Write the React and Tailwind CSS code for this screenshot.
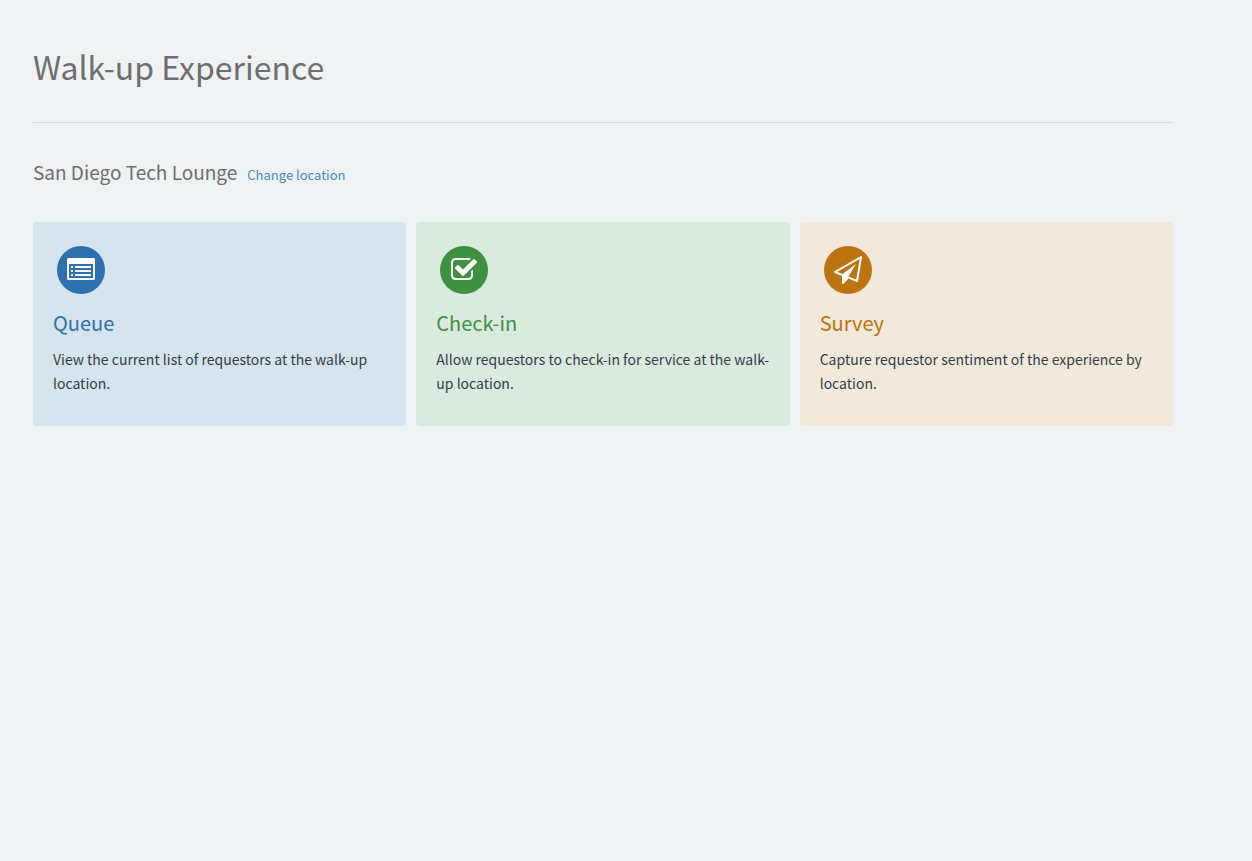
import React from "react";

function QueueIcon() {
  return (
    <svg viewBox="0 0 28 28" className="size-7" fill="none" aria-hidden="true">
      <path
        fill="currentColor"
        fillRule="evenodd"
        d="M1.500 2h25A1.500 1.500 0 0 1 28 3.500v19a1.500 1.500 0 0 1-1.500 1.500h-25A1.500 1.500 0 0 1 0 22.500v-19A1.500 1.500 0 0 1 1.500 2zM2.500 8a.5.5 0 0 0-.5.500v13a.5.5 0 0 0 .5.500h23a.5.5 0 0 0 .5-.5v-13a.5.5 0 0 0-.5-.5z"
      />
      <g fill="currentColor">
        <rect x="4" y="10" width="2" height="2" rx="0.500" />
        <rect x="4" y="14" width="2" height="2" rx="0.500" />
        <rect x="4" y="18" width="2" height="2" rx="0.500" />
        <rect x="8" y="10" width="16" height="2" rx="0.500" />
        <rect x="8" y="14" width="16" height="2" rx="0.500" />
        <rect x="8" y="18" width="16" height="2" rx="0.500" />
      </g>
    </svg>
  );
}

function CheckInIcon() {
  return (
    <svg viewBox="0 0 1792 1792" className="size-7" fill="currentColor" aria-hidden="true">
      <path d="M1472 930v318q0 119-84.500 203.500t-203.500 84.500h-832q-119 0-203.500-84.500t-84.500-203.500v-832q0-119 84.500-203.500t203.500-84.500h832q63 0 117 25 15 7 18 23 3 17-9 29l-49 49q-10 10-23 10-3 0-9-2-23-6-45-6h-832q-66 0-113 47t-47 113v832q0 66 47 113t113 47h832q66 0 113-47t47-113v-254q0-13 9-22l64-64q10-10 23-10 6 0 12 3 20 8 20 29zm231-489l-814 814q-24 24-57 24t-57-24l-430-430q-24-24-24-57t24-57l110-110q24-24 57-24t57 24l263 263 647-647q24-24 57-24t57 24l110 110q24 24 24 57t-24 57z" />
    </svg>
  );
}

function SurveyIcon() {
  return (
    <svg viewBox="0 0 1792 1792" className="size-7" fill="currentColor" aria-hidden="true">
      <path d="M1764 11q33 24 27 64l-256 1536q-5 29-32 45-14 8-31 8-11 0-24-5l-527-215-298 327q-18 21-47 21-14 0-23-4-19-7-30-23.500t-11-36.500v-452l-472-193q-37-14-40-55-3-39 32-59l1664-960q35-21 68 2zm-342 1499l221-1323-1434 827 336 137 863-639-478 797z" />
    </svg>
  );
}

const cards = [
  {
    title: "Queue",
    text: "View the current list of requestors at the walk-up location.",
    Icon: QueueIcon,
    panel: "bg-[#d6e4ed]",
    badge: "bg-[#2e71ae]",
    heading: "text-[#2e71ae]",
  },
  {
    title: "Check-in",
    text: "Allow requestors to check-in for service at the walk-up location.",
    Icon: CheckInIcon,
    panel: "bg-[#daeadf]",
    badge: "bg-[#3d9140]",
    heading: "text-[#3d9140]",
  },
  {
    title: "Survey",
    text: "Capture requestor sentiment of the experience by location.",
    Icon: SurveyIcon,
    panel: "bg-[#f1e9dc]",
    badge: "bg-[#bc7410]",
    heading: "text-[#bc7410]",
  },
];

export default function App() {
  return (
    <main className="min-h-screen bg-[#eff3f4] pt-[42px] pr-[79px] pb-8 pl-[33px] font-['Noto_Sans_CJK_SC','Noto_Sans',sans-serif] text-[#343d47]">
      <header className="border-b border-[#d9dcde] pb-8">
        <h1 className="text-[32px] leading-[48px] text-[#6d6e70]">Walk-up Experience</h1>
      </header>

      <div className="flex items-baseline gap-[10px] pt-[33px] pb-[34px]">
        <h2 className="text-[19px] leading-8 text-[#6d6e70]">San Diego Tech Lounge</h2>
        <a href="#location" className="text-[13px] leading-5 text-[#428bca]">
          Change location
        </a>
      </div>

      <nav aria-label="Walk-up options" className="grid grid-cols-3 gap-[10px]">
        {cards.map(({ title, text, Icon, panel, badge, heading }) => (
          <a key={title} href={`#${title.toLowerCase()}`} className={`block rounded px-5 pt-6 pb-[31px] ${panel}`}>
            <span className={`ml-1 flex size-12 items-center justify-center rounded-full text-white ${badge}`}>
              <Icon />
            </span>
            <h3 className={`mt-[13px] mb-2 text-[20px] leading-8 ${heading}`}>{title}</h3>
            <p className="text-[14px] leading-6">{text}</p>
          </a>
        ))}
      </nav>
    </main>
  );
}
